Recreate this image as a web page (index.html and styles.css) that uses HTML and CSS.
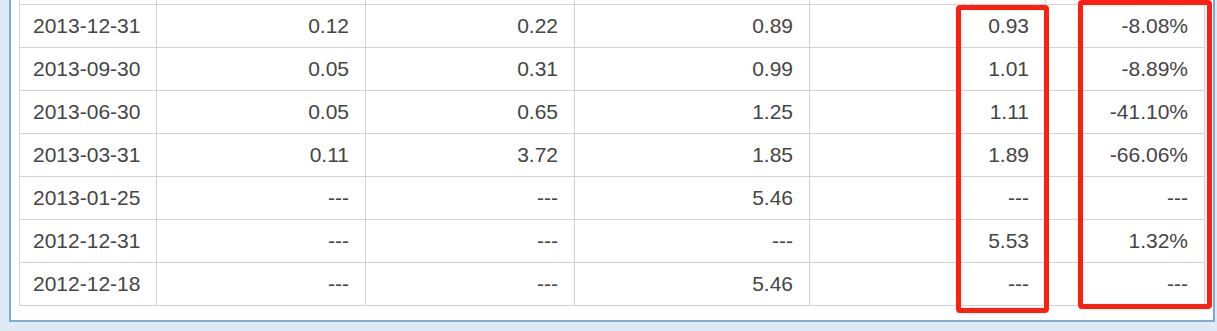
FILE: index.html
```html
<!DOCTYPE html>
<html>
<head>
<meta charset="utf-8">
<link rel="stylesheet" href="styles.css">
</head>
<body>
<div class="frame">
  <table class="data">
    <colgroup>
      <col class="c1"><col class="c2"><col class="c3"><col class="c4"><col class="c5"><col class="c6">
    </colgroup>
    <tbody>
      <tr class="stub"><td></td><td></td><td></td><td></td><td></td><td></td></tr>
      <tr><td class="date">2013-12-31</td><td>0.12</td><td>0.22</td><td>0.89</td><td>0.93</td><td>-8.08%</td></tr>
      <tr><td class="date">2013-09-30</td><td>0.05</td><td>0.31</td><td>0.99</td><td>1.01</td><td>-8.89%</td></tr>
      <tr><td class="date">2013-06-30</td><td>0.05</td><td>0.65</td><td>1.25</td><td>1.11</td><td>-41.10%</td></tr>
      <tr><td class="date">2013-03-31</td><td>0.11</td><td>3.72</td><td>1.85</td><td>1.89</td><td>-66.06%</td></tr>
      <tr><td class="date">2013-01-25</td><td>---</td><td>---</td><td>5.46</td><td>---</td><td>---</td></tr>
      <tr><td class="date">2012-12-31</td><td>---</td><td>---</td><td>---</td><td>5.53</td><td>1.32%</td></tr>
      <tr><td class="date">2012-12-18</td><td>---</td><td>---</td><td>5.46</td><td>---</td><td>---</td></tr>
    </tbody>
  </table>
  <div class="mark mark-a"></div>
  <div class="mark mark-b"></div>
</div>
</body>
</html>
```
FILE: styles.css
```css
html, body {
  margin: 0;
  padding: 0;
}
body {
  background: #dfeaf6;
  width: 1217px;
  height: 331px;
  overflow: hidden;
  font-family: "Liberation Sans", Arial, sans-serif;
}
.frame {
  position: relative;
  margin-left: 9px;
  background: #ffffff;
  border: 2px solid #7eaecd;
  border-top: none;
  padding: 0 8px 14px 8px;
  box-sizing: content-box;
  width: 1186px;
}
.data {
  border-collapse: collapse;
  table-layout: fixed;
  width: 1186px;
  color: #454545;
  font-size: 21px;
}
.c1 { width: 137px; }
.c2 { width: 209px; }
.c3 { width: 209px; }
.c4 { width: 235px; }
.c5 { width: 236px; }
.c6 { width: 159px; }
.data td {
  border: 1px solid #d3d3d3;
  height: 43px;
  padding: 0 16px 0 0;
  text-align: right;
  vertical-align: middle;
  line-height: 24px;
  box-sizing: border-box;
}
.data td.date {
  text-align: left;
  padding: 0 0 0 13px;
}
.data tr.stub td {
  height: 4px;
  border-top: none;
  padding: 0;
}
.mark {
  position: absolute;
  border: 5px solid #ff1f12;
  border-radius: 4px;
  box-sizing: border-box;
}
.mark-a {
  left: 945px;
  top: 5px;
  width: 93px;
  height: 308px;
}
.mark-b {
  left: 1067px;
  top: 0;
  width: 134px;
  height: 309px;
}
```
